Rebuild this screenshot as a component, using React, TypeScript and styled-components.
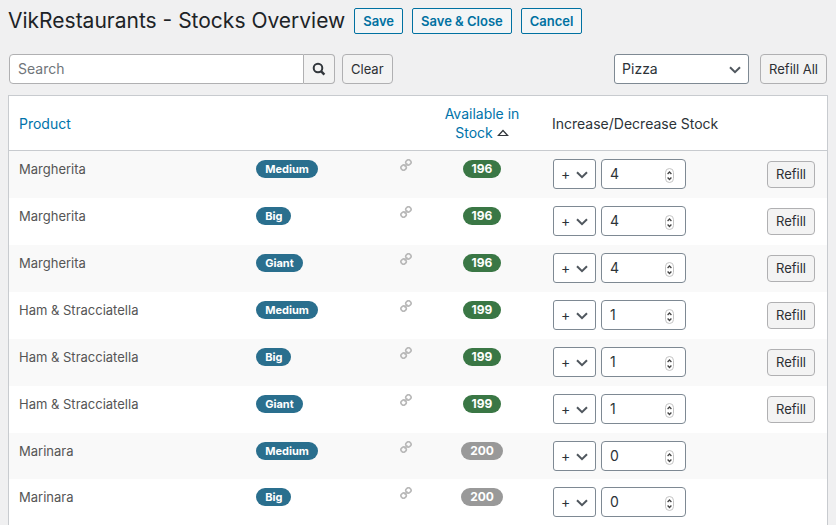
import React, { useState } from "react";
import styled, { createGlobalStyle } from "styled-components";

const GlobalStyle = createGlobalStyle`
  *, *::before, *::after { box-sizing: border-box; }
  body {
    margin: 0;
    background: #f0f0f1;
    color: #2c3338;
    font: 13px/18px Inter, "Liberation Sans", sans-serif;
  }
  button, input, select { font-family: inherit; margin: 0; }
`;

const Page = styled.main`
  padding: 6px 8px 0;
`;

const Header = styled.header`
  display: flex;
  align-items: center;
  gap: 9px;
  height: 30px;
`;

const Title = styled.h1`
  margin: 0;
  color: #1d2327;
  font-size: 21px;
  font-weight: 400;
  line-height: 30px;
  white-space: nowrap;
`;

const ActionButton = styled.button`
  height: 26px;
  padding: 0 8px;
  border: 1px solid #0071a1;
  border-radius: 2px;
  background: #f3f5f6;
  color: #0071a1;
  font-size: 13px;
  font-weight: 600;
  white-space: nowrap;
`;

const Toolbar = styled.div`
  display: flex;
  align-items: center;
  gap: 7px;
  padding: 18px 1px 11px;
`;

const SearchGroup = styled.form`
  display: flex;
  flex: 0 1 326px;
`;

const SearchInput = styled.input`
  flex: 1;
  min-width: 0;
  height: 30px;
  padding: 0 8px 2px;
  border: 1px solid #b0b0b2;
  border-radius: 4px 0 0 4px;
  background: #fff;
  color: #2c3338;
  font-size: 14px;
  &::placeholder { color: #70757a; opacity: 1; }
`;

const Button = styled.button<{ $small?: boolean }>`
  height: ${(p) => (p.$small ? 27 : 30)}px;
  padding: 0 8px ${(p) => (p.$small ? 1 : 0)}px;
  border: 1px solid #b0b0b2;
  border-radius: 4px;
  background: #f3f3f3;
  color: #2c2f33;
  font-size: 13px;
  white-space: nowrap;
`;

const SearchButton = styled(Button)`
  display: grid;
  place-items: center;
  width: 31px;
  padding: 0;
  border-left: 0;
  border-radius: 0 4px 4px 0;
`;

const Filters = styled.div`
  display: flex;
  gap: 11px;
  margin-left: auto;
`;

const SelectBox = styled.div<{ $wide?: boolean }>`
  position: relative;
  flex: none;
  width: ${(p) => (p.$wide ? 135 : 43)}px;
  svg {
    position: absolute;
    right: 8px;
    top: 10px;
    pointer-events: none;
  }
`;

const Select = styled.select`
  display: block;
  width: 100%;
  height: 30px;
  padding: 0 20px 2px 7px;
  border: 1px solid #7e8993;
  border-radius: 3px;
  background: #fff;
  color: #2c3338;
  font-size: 14px;
  appearance: none;
`;

const StockTable = styled.table`
  width: 100%;
  table-layout: fixed;
  border: 1px solid #c8cbcf;
  border-spacing: 0;
  background: #fff;
`;

const Col = styled.col<{ $width?: string }>`
  width: ${(p) => p.$width ?? "auto"};
`;

const HeadCell = styled.th<{ $center?: boolean }>`
  padding: 8px 10px;
  border-bottom: 1px solid #c8cbcf;
  color: #2c3338;
  font-size: 14px;
  font-weight: 400;
  line-height: 19px;
  text-align: ${(p) => (p.$center ? "center" : "left")};
  white-space: ${(p) => (p.$center ? "normal" : "nowrap")};
`;

const SortLink = styled.a`
  color: #0073aa;
  text-decoration: none;
`;

const Row = styled.tr`
  &:nth-child(odd) { background: #f9f9f9; }
`;

const Cell = styled.td<{ $center?: boolean }>`
  padding: 8px 10px;
  color: #555;
  line-height: 20px;
  text-align: ${(p) => (p.$center ? "center" : "left")};
  vertical-align: top;
`;

const LinkCell = styled(Cell)`
  padding: 8px 0;
  text-align: center;
  svg { display: block; margin: 0 auto; }
`;

const RefillCell = styled(Cell)`
  padding: 10px 12px 10px 0;
  text-align: right;
  button { display: block; margin-left: auto; }
`;

const tones = { option: "#2a6f8e", stocked: "#3a7745", idle: "#999" };

const Badge = styled.span<{ $tone: keyof typeof tones }>`
  display: block;
  width: max-content;
  margin: 1px ${(p) => (p.$tone === "option" ? "0" : "auto")};
  padding: 0 9px;
  border-radius: 9px;
  background: ${(p) => tones[p.$tone]};
  color: #fff;
  font-size: ${(p) => (p.$tone === "option" ? 11 : 12)}px;
  font-weight: 700;
  line-height: 18px;
`;

const Adjust = styled.div`
  display: flex;
  gap: 5px;
  padding-left: 1px;
`;

const NumberBox = styled.div`
  position: relative;
  width: 85px;
  svg {
    position: absolute;
    right: 12px;
    top: 9px;
    pointer-events: none;
  }
`;

const NumberInput = styled.input`
  display: block;
  width: 100%;
  height: 30px;
  padding: 0 24px 2px 8px;
  border: 1px solid #7e8993;
  border-radius: 4px;
  background: #fff;
  color: #2c3338;
  font-size: 14px;
  appearance: textfield;
  &::-webkit-inner-spin-button { appearance: none; margin: 0; }
`;

const Chevron = () => (
  <svg width="12" height="12" viewBox="0 0 12 12" fill="none" stroke="#50575e" strokeWidth="2" aria-hidden="true">
    <path d="M1 3.2 6 8.2 11 3.2" />
  </svg>
);

const Stepper = () => (
  <svg width="9" height="16" viewBox="0 0 9 16" fill="none" aria-hidden="true">
    <rect x=".5" y=".5" width="8" height="14" rx="4" fill="#fff" stroke="#c4c4c4" />
    <path d="M2.6 6 4.5 4 6.4 6M2.6 9.5 4.5 11.5 6.4 9.5" stroke="#444" strokeWidth="1.3" />
  </svg>
);

const SearchIcon = () => (
  <svg width="14" height="14" viewBox="0 0 14 14" fill="none" stroke="#32373c" strokeWidth="2" aria-hidden="true">
    <circle cx="6" cy="6" r="4.3" />
    <path d="m9 9.2 3.4 3.4" strokeWidth="2.4" />
  </svg>
);

const LinkIcon = () => (
  <svg width="12" height="12" viewBox="0 0 12 12" fill="none" stroke="#b8b8b8" strokeWidth="1.6" aria-hidden="true">
    <rect x="5.8" y="0.9" width="5.2" height="5" rx="2.4" transform="rotate(-40 8.4 3.4)" />
    <rect x="1" y="6.1" width="5.2" height="5" rx="2.4" transform="rotate(-40 3.6 8.6)" />
    <path d="m4.5 7.5 3-3" />
  </svg>
);

const SortIcon = () => (
  <svg width="12" height="9" viewBox="0 0 12 9" fill="none" stroke="#32373c" strokeWidth="1.2" aria-hidden="true">
    <path d="M1.4 6.5 6 1.5 10.6 6.5Z" />
  </svg>
);

type Item = { product: string; option: string; stock: number; delta: number };

const items: Item[] = [
  { product: "Margherita", option: "Medium", stock: 196, delta: 4 },
  { product: "Margherita", option: "Big", stock: 196, delta: 4 },
  { product: "Margherita", option: "Giant", stock: 196, delta: 4 },
  { product: "Ham & Stracciatella", option: "Medium", stock: 199, delta: 1 },
  { product: "Ham & Stracciatella", option: "Big", stock: 199, delta: 1 },
  { product: "Ham & Stracciatella", option: "Giant", stock: 199, delta: 1 },
  { product: "Marinara", option: "Medium", stock: 200, delta: 0 },
  { product: "Marinara", option: "Big", stock: 200, delta: 0 },
];

function StockRow({ item }: { item: Item }) {
  const label = `${item.product} ${item.option}`;
  return (
    <Row>
      <Cell>{item.product}</Cell>
      <Cell><Badge $tone="option">{item.option}</Badge></Cell>
      <LinkCell><LinkIcon /></LinkCell>
      <Cell $center>
        <Badge $tone={item.delta > 0 ? "stocked" : "idle"}>{item.stock}</Badge>
      </Cell>
      <Cell>
        <Adjust>
          <SelectBox>
            <Select aria-label={`Operation for ${label}`} defaultValue="+">
              <option>+</option>
              <option>-</option>
            </Select>
            <Chevron />
          </SelectBox>
          <NumberBox>
            <NumberInput type="number" min={0} defaultValue={item.delta} aria-label={`Quantity for ${label}`} />
            <Stepper />
          </NumberBox>
        </Adjust>
      </Cell>
      <RefillCell>
        {item.delta > 0 && <Button $small type="button">Refill</Button>}
      </RefillCell>
    </Row>
  );
}

export default function App() {
  const [query, setQuery] = useState("");
  const visible = items.filter((i) => i.product.toLowerCase().includes(query.toLowerCase()));
  return (
    <Page>
      <GlobalStyle />
      <Header>
        <Title>VikRestaurants - Stocks Overview</Title>
        <ActionButton type="button">Save</ActionButton>
        <ActionButton type="button">Save &amp; Close</ActionButton>
        <ActionButton type="button">Cancel</ActionButton>
      </Header>
      <Toolbar>
        <SearchGroup onSubmit={(e) => e.preventDefault()}>
          <SearchInput
            type="text"
            placeholder="Search"
            aria-label="Search"
            value={query}
            onChange={(e) => setQuery(e.target.value)}
          />
          <SearchButton type="submit" aria-label="Run search"><SearchIcon /></SearchButton>
        </SearchGroup>
        <Button type="button" onClick={() => setQuery("")}>Clear</Button>
        <Filters>
          <SelectBox $wide>
            <Select aria-label="Menu" defaultValue="Pizza">
              <option>Pizza</option>
            </Select>
            <Chevron />
          </SelectBox>
          <Button type="button">Refill All</Button>
        </Filters>
      </Toolbar>
      <StockTable>
        <colgroup>
          <Col $width="29%" />
          <Col />
          <Col $width="32px" />
          <Col $width="120px" />
          <Col $width="215px" />
          <Col $width="70px" />
        </colgroup>
        <thead>
          <tr>
            <HeadCell><SortLink href="#product">Product</SortLink></HeadCell>
            <HeadCell />
            <HeadCell />
            <HeadCell $center>
              <SortLink href="#stock">Available in Stock <SortIcon /></SortLink>
            </HeadCell>
            <HeadCell>Increase/Decrease Stock</HeadCell>
            <HeadCell />
          </tr>
        </thead>
        <tbody>
          {visible.map((item) => (
            <StockRow key={item.product + item.option} item={item} />
          ))}
        </tbody>
      </StockTable>
    </Page>
  );
}
